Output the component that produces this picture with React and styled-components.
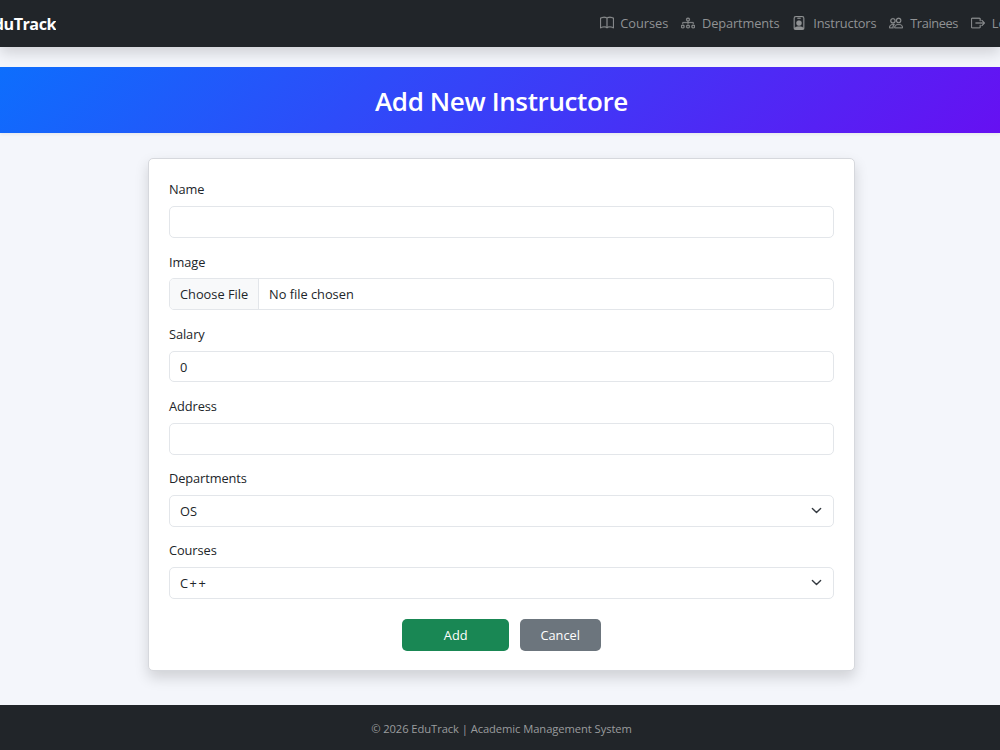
import React, { useState } from 'react';
import styled, { createGlobalStyle } from 'styled-components';
import { BsBook, BsDiagram3, BsPersonBadge, BsPeople, BsBoxArrowRight } from 'react-icons/bs';

const GlobalStyle = createGlobalStyle`
  *,
  *::before,
  *::after {
    box-sizing: border-box;
  }

  body {
    margin: 0;
    overflow: hidden;
    background: #f4f6fb;
    color: #212529;
    font-family: 'Segoe UI', 'Open Sans', 'Noto Sans', sans-serif;
    font-size: 12.8px;
    line-height: 20px;
  }
`;

const StyledPage = styled.div`
  display: flex;
  flex-direction: column;
  height: 750px;
  overflow: hidden;
`;

const StyledNavbar = styled.nav`
  display: flex;
  flex: none;
  align-items: center;
  height: 47px;
  background: #212529;
  box-shadow: 0 6.7px 13.4px rgba(0, 0, 0, 0.15);
`;

const StyledBrand = styled.a`
  display: flex;
  flex: none;
  justify-content: flex-end;
  width: 56px;
  margin-right: 543.5px;
  color: #fff;
  font-size: 16.2px;
  font-weight: 700;
  letter-spacing: -0.5px;
  overflow: hidden;
`;

const StyledNavList = styled.div`
  display: flex;
  flex: none;
  gap: 13px;
  padding-bottom: 1px;
`;

const StyledNavLink = styled.a`
  display: flex;
  flex: none;
  align-items: center;
  gap: 6.8px;
  color: #909294;
  letter-spacing: ${({ $spacing }) => $spacing || 0}px;
  white-space: nowrap;

  svg {
    width: 14px;
    height: 14px;
    stroke-width: 0.3px;
  }
`;

const StyledBanner = styled.header`
  display: flex;
  flex: none;
  align-items: center;
  justify-content: center;
  height: 66px;
  margin-top: 20px;
  padding: 2px 0 0 3px;
  background: linear-gradient(135deg, #0d6efd, #6610f2);
  box-shadow: 0 1.7px 3.4px rgba(0, 0, 0, 0.075);
`;

const StyledTitle = styled.h1`
  margin: 0;
  color: #fff;
  font-size: 26px;
  font-weight: 600;
  line-height: 32px;
  letter-spacing: -0.37px;
`;

const StyledCard = styled.form`
  flex: none;
  width: 707px;
  height: 513px;
  margin: 25px 0 0 148px;
  padding: 20.4px 20px 20px;
  background: #fff;
  border: 1px solid #d6d8dd;
  border-radius: 5px;
  box-shadow: 0 6.7px 13.4px rgba(0, 0, 0, 0.15);
`;

const StyledField = styled.div`
  display: flex;
  flex-direction: column;
  gap: 6.7px;
  margin-bottom: 13.4px;

  label {
    height: 20.2px;
    letter-spacing: -0.08px;
  }
`;

const controlStyles = `
  display: block;
  width: 100%;
  height: 31.9px;
  padding: 0 10px;
  background: #fff;
  border: 1px solid #e3e6ea;
  border-radius: 5px;
  color: #212529;
  font: inherit;
  outline: 0;
`;

const StyledInput = styled.input`
  ${controlStyles}
`;

const StyledSelectWrap = styled.div`
  display: grid;
  align-items: center;

  > * {
    grid-area: 1 / 1;
  }

  svg {
    justify-self: end;
    margin-right: 12px;
    pointer-events: none;
  }
`;

const StyledSelect = styled.select`
  ${controlStyles}
  appearance: none;
  letter-spacing: ${({ $spacing }) => $spacing || 0}px;
`;

const StyledFile = styled.div`
  ${controlStyles}
  display: flex;
  align-items: stretch;
  padding: 0;
  line-height: 31px;
  overflow: hidden;
`;

const StyledFileButton = styled.span`
  width: 89px;
  padding-left: 10px;
  background: #f8f9fa;
  border-right: 1px solid #e3e6ea;
`;

const StyledFileName = styled.span`
  padding-left: 10px;
`;

const StyledActions = styled.div`
  display: flex;
  gap: 10.5px;
  justify-content: center;
  margin-top: 20px;
`;

const StyledButton = styled.button`
  width: ${({ $width }) => $width}px;
  height: 32px;
  padding: 0;
  background: ${({ $color }) => $color};
  border: 0;
  border-radius: 5px;
  color: #fff;
  font: inherit;
`;

const StyledFooter = styled.footer`
  flex: none;
  height: 45px;
  margin-top: auto;
  padding: 14px 0 0 3px;
  background: #212529;
  color: #9a9c9e;
  font-size: 11.2px;
  letter-spacing: -0.07px;
  text-align: center;
`;

const navItems = [
  { label: 'Courses', icon: BsBook, spacing: -0.03 },
  { label: 'Departments', icon: BsDiagram3, spacing: -0.13 },
  { label: 'Instructors', icon: BsPersonBadge, spacing: -0.16 },
  { label: 'Trainees', icon: BsPeople, spacing: -0.38 },
  { label: 'Logout', icon: BsBoxArrowRight },
];

const Select = ({ id, options, spacing }) => (
  <StyledSelectWrap>
    <StyledSelect id={id} $spacing={spacing}>
      {options.map(option => (
        <option key={option}>{option}</option>
      ))}
    </StyledSelect>
    <svg width="11" height="11" viewBox="0 0 16 16" aria-hidden="true">
      <path
        d="m2 5 6 6 6-6"
        fill="none"
        stroke="#343a40"
        strokeWidth="2"
        strokeLinecap="round"
        strokeLinejoin="round"
      />
    </svg>
  </StyledSelectWrap>
);

const App = () => {
  const [salary, setSalary] = useState('0');

  return (
    <>
      <GlobalStyle />
      <StyledPage>
        <StyledNavbar>
          <StyledBrand>EduTrack</StyledBrand>
          <StyledNavList>
            {navItems.map(({ label, icon: Icon, spacing }) => (
              <StyledNavLink key={label} $spacing={spacing}>
                <Icon />
                <span>{label}</span>
              </StyledNavLink>
            ))}
          </StyledNavList>
        </StyledNavbar>

        <StyledBanner>
          <StyledTitle>Add New Instructore</StyledTitle>
        </StyledBanner>

        <StyledCard onSubmit={evt => evt.preventDefault()}>
          <StyledField>
            <label htmlFor="name">Name</label>
            <StyledInput id="name" />
          </StyledField>
          <StyledField>
            <label>Image</label>
            <StyledFile>
              <StyledFileButton>Choose File</StyledFileButton>
              <StyledFileName>No file chosen</StyledFileName>
            </StyledFile>
          </StyledField>
          <StyledField>
            <label htmlFor="salary">Salary</label>
            <StyledInput id="salary" value={salary} onChange={evt => setSalary(evt.target.value)} />
          </StyledField>
          <StyledField>
            <label htmlFor="address">Address</label>
            <StyledInput id="address" />
          </StyledField>
          <StyledField>
            <label htmlFor="departments">Departments</label>
            <Select id="departments" options={['OS']} />
          </StyledField>
          <StyledField>
            <label htmlFor="courses">Courses</label>
            <Select id="courses" options={['C++']} spacing={1.5} />
          </StyledField>
          <StyledActions>
            <StyledButton type="submit" $width={107} $color="#198754">
              Add
            </StyledButton>
            <StyledButton type="button" $width={81} $color="#6c757d">
              Cancel
            </StyledButton>
          </StyledActions>
        </StyledCard>

        <StyledFooter>© 2026 EduTrack | Academic Management System</StyledFooter>
      </StyledPage>
    </>
  );
};

export default App;
